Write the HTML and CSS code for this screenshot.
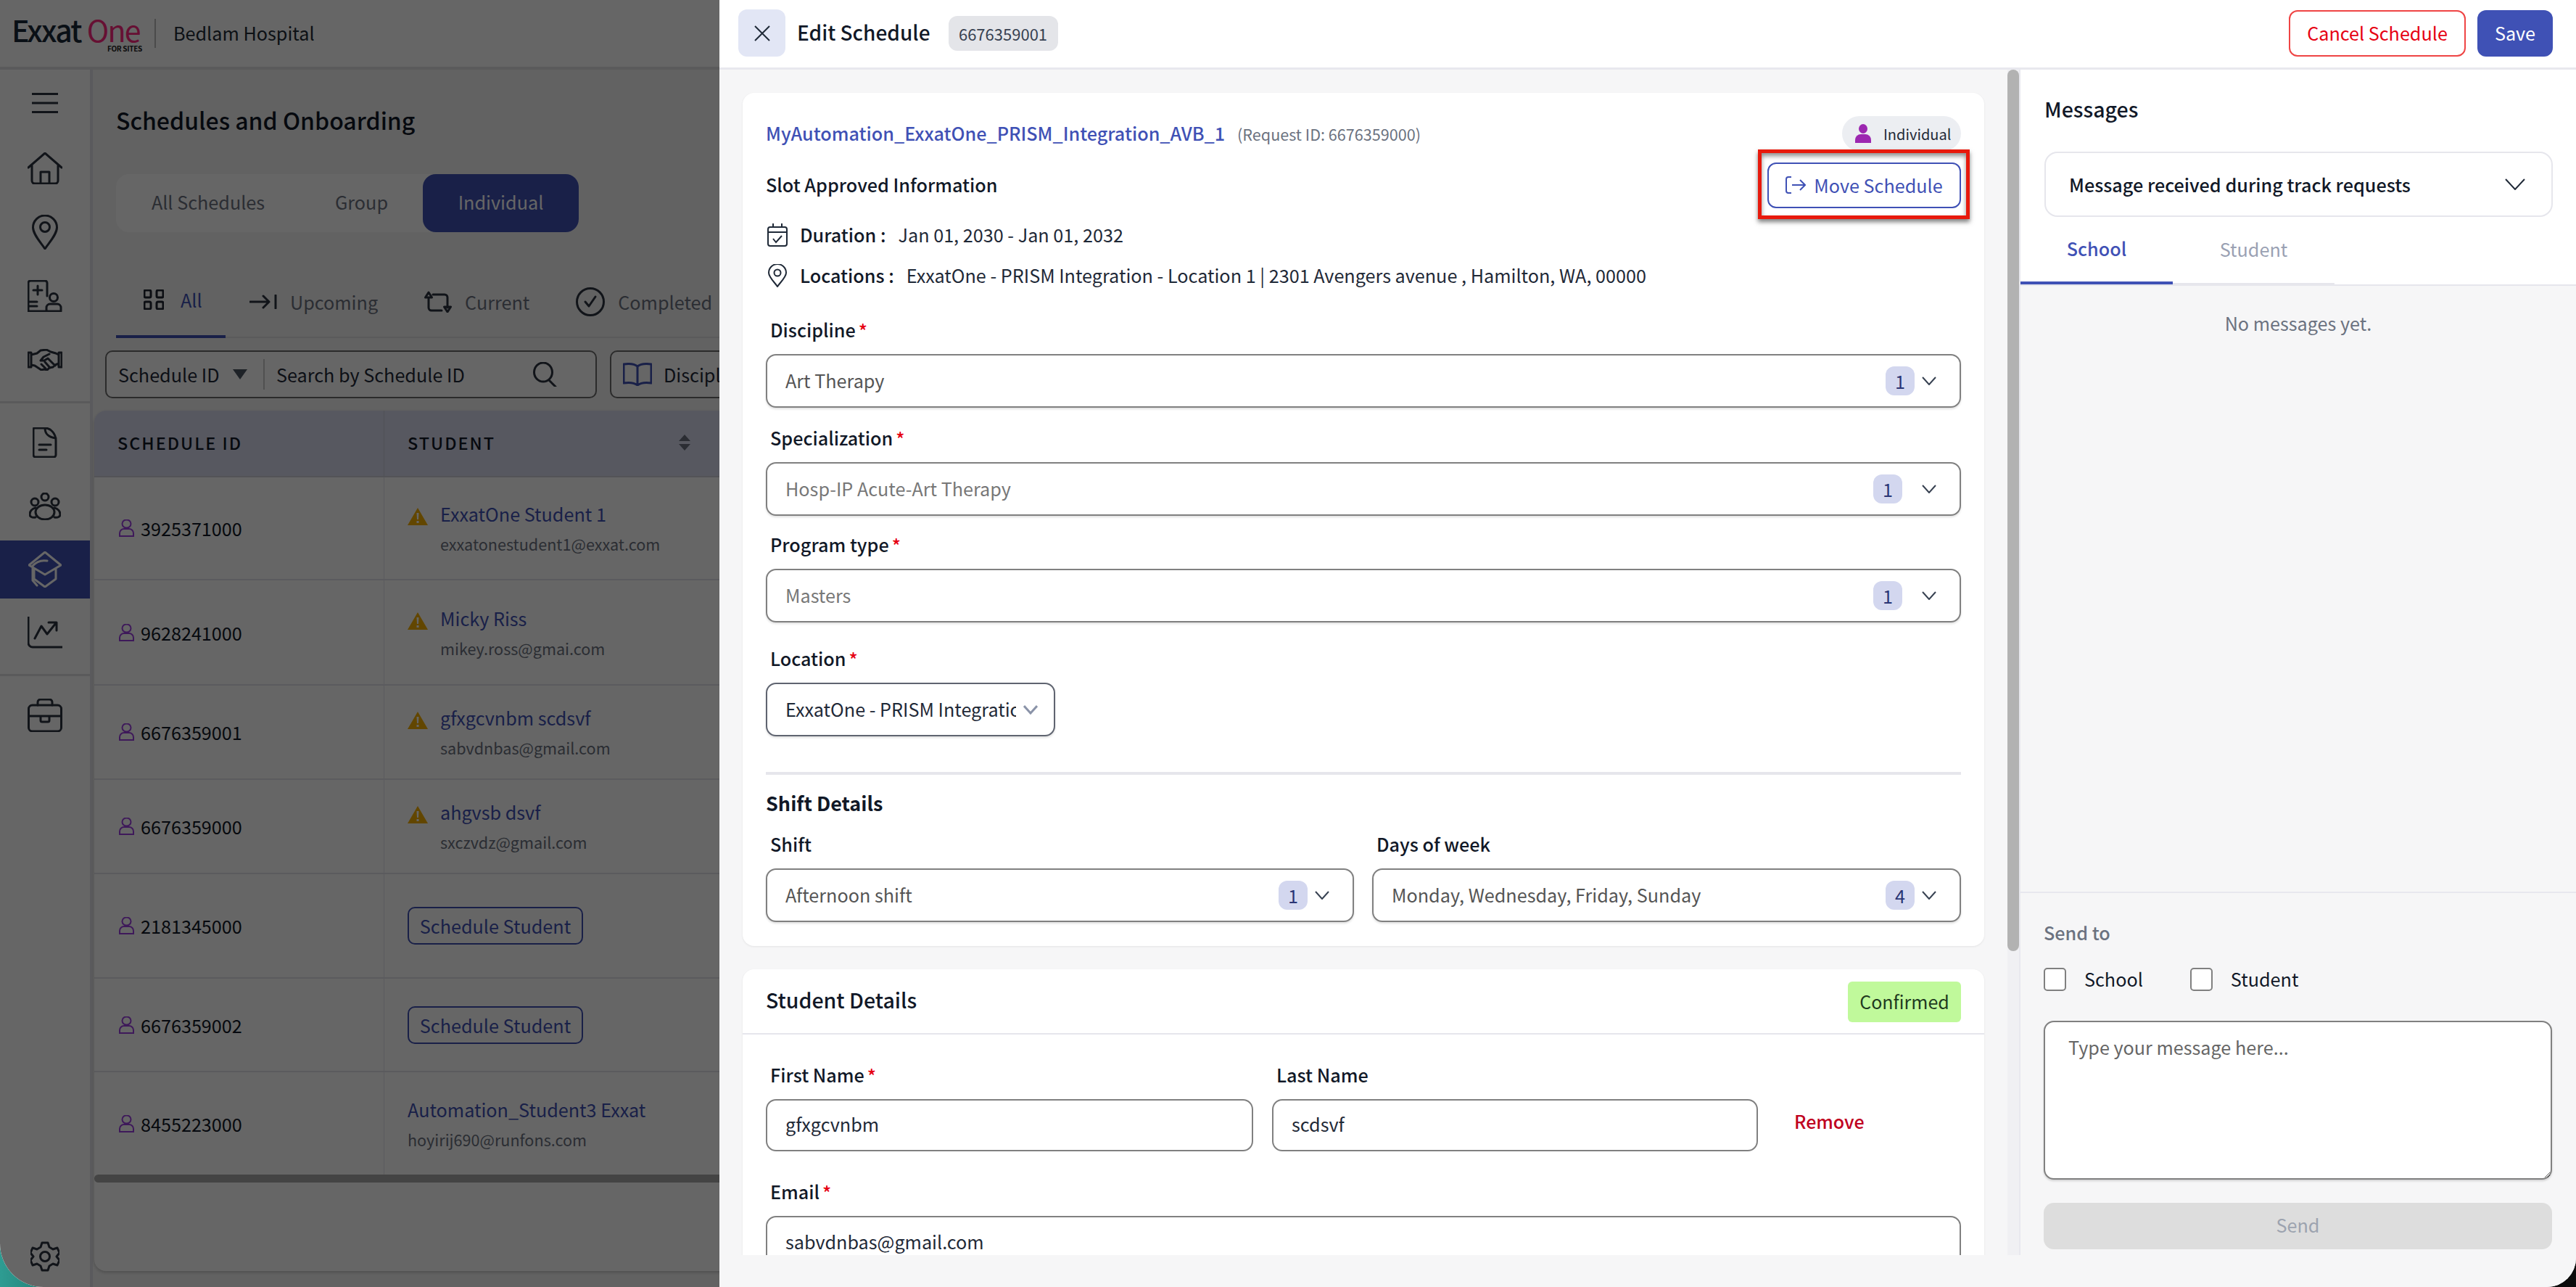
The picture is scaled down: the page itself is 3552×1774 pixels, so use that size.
FILE: index.html
```html
<!DOCTYPE html>
<html lang="en">
<head>
<meta charset="utf-8">
<title>Edit Schedule</title>
<link rel="stylesheet" href="styles.css">
</head>
<body>
<div class="window">
  <div class="app">
    <header class="topbar">
      <div class="logo">
        <div class="logo-word"><span class="logo-exxat">Exxat</span><span class="logo-one">One</span></div>
        <div class="logo-sub">FOR SITES</div>
      </div>
      <div class="logo-rule"></div>
      <div class="org">Bedlam Hospital</div>
    </header>
    <div class="app-body">
      <nav class="sidebar">
        <div class="nav-item nav-menu"><svg width="36" height="28" viewBox="0 0 36 28" class="ico"><path d="M0 1.500h36M0 14h36M0 26.500h36"/></svg></div>
        <div class="nav-item"><svg width="48" height="44" viewBox="0 0 48 44" class="ico"><path d="M1 21 24 1l23 20M6 18v21a4 4 0 0 0 4 4h28a4 4 0 0 0 4-4V18M18 43V27h12v16"/></svg></div>
        <div class="nav-item"><svg width="36" height="48" viewBox="0 0 36 48" class="ico"><path d="M18 47C12 38 1.500 27 1.500 17.500a16.500 16.500 0 0 1 33 0C34.500 27 24 38 18 47Z"/><circle cx="18" cy="17" r="6.500"/></svg></div>
        <div class="nav-item"><svg width="48" height="44" viewBox="0 0 48 44" class="ico"><path d="M1 30V4a3 3 0 0 1 3-3h20a3 3 0 0 1 3 3v18M1 30v13h26M1 30h12M1 36h12M14 8v12M8 14h12"/><circle cx="36" cy="24" r="5.500"/><path d="M26 43v-5a5 5 0 0 1 5-5h10a5 5 0 0 1 5 5v5Z"/></svg></div>
        <div class="nav-item"><svg width="48" height="30" viewBox="0 0 48 30" class="ico"><path d="M1 5v20h4V5ZM47 5v20h-4V5ZM5 8l8-2 5-4 8-1 6 3 7 2 4 2M5 22l5 1 9 6 4-1 4 1 3-3 5-1 3-3 5-2M30 7l-8 4-4 5 5 0 5-3 10 10M19 21l6 6M24 18l7 8"/></svg></div>
        <div class="nav-rule nav-rule-a"></div>
        <div class="nav-item"><svg width="34" height="42" viewBox="0 0 34 42" class="ico"><path d="M3 1h14c8 0 15 8 15 17v20a3 3 0 0 1-3 3H4a3 3 0 0 1-3-3V3a2 2 0 0 1 2-2ZM17 1c0 5 1 12 15 14M9 24h16M9 31h10"/></svg></div>
        <div class="nav-item"><svg width="44" height="38" viewBox="0 0 44 38" class="ico"><circle cx="22" cy="6" r="5"/><circle cx="8" cy="13" r="5"/><circle cx="36" cy="13" r="5"/><ellipse cx="22" cy="27" rx="13" ry="10"/><path d="M9 21c-5 1-8 5-8 9 0 3 3 5 8 4M35 21c5 1 8 5 8 9 0 3-3 5-8 4"/></svg></div>
        <div class="nav-item nav-active"><svg width="46" height="50" viewBox="0 0 46 50" class="ico ico-light"><path d="M23 1 45 19 23 32 1 19ZM8 24v14l15 11 15-11V24M6 20c7-8 14-8 20-7M6 20v20l6 7"/></svg></div>
        <div class="nav-item"><svg width="48" height="44" viewBox="0 0 48 44" class="ico"><path d="M1 0v36a6 6 0 0 0 6 6h41M10 30l9-17 8 11 12-15M29 8h11v11"/></svg></div>
        <div class="nav-rule nav-rule-b"></div>
        <div class="nav-item"><svg width="48" height="46" viewBox="0 0 48 46" class="ico"><rect x="1.500" y="9" width="45" height="36" rx="5"/><path d="M14 9V5a4 4 0 0 1 4-4h12a4 4 0 0 1 4 4v4M1.500 24h45M18 24v6a2 2 0 0 0 2 2h8a2 2 0 0 0 2-2v-6"/></svg></div>
        <div class="nav-item nav-gear"><svg width="40" height="42" viewBox="0 0 40 42" class="ico"><path d="M16 2h8l2 6 5 3 6-2 3 7-4 5 4 5-3 7-6-2-5 3-2 6h-8l-2-6-5-3-6 2-3-7 4-5-4-5 3-7 6 2 5-3Z" stroke-linejoin="round"/><circle cx="20" cy="21" r="6.500"/></svg></div>
      </nav>
      <main class="main">
        <h1 class="page-title">Schedules and Onboarding</h1>
        <div class="segment">
          <span class="seg seg-all">All Schedules</span>
          <span class="seg seg-group">Group</span>
          <span class="seg seg-on">Individual</span>
        </div>
        <div class="tabs">
          <div class="tab tab-on"><svg width="28" height="28" viewBox="0 0 28 28" class="ico"><rect x="1" y="1" width="9" height="10" rx="2"/><rect x="18" y="1" width="9" height="10" rx="2"/><rect x="1" y="17" width="9" height="10" rx="2"/><rect x="18" y="17" width="9" height="10" rx="2"/></svg><span>All</span></div>
          <div class="tab"><svg width="38" height="20" viewBox="0 0 38 20" class="ico"><path d="M1 10h26M19 2l8 8-8 8M36 1v18"/></svg><span>Upcoming</span></div>
          <div class="tab"><svg width="38" height="30" viewBox="0 0 38 30" class="ico"><path d="M6 9v14a4 4 0 0 0 4 4h14M1.500 9 6 2l4.500 7ZM12 5h16a4 4 0 0 1 4 4v14M27.500 22l4.500 7 4.500-7Z"/></svg><span>Current</span></div>
          <div class="tab"><svg width="40" height="40" viewBox="0 0 40 40" class="ico"><circle cx="20" cy="20" r="18.500"/><path d="M13 20l5 6 9-13"/></svg><span>Completed</span></div>
        </div>
        <div class="filters">
          <div class="searchbox">
            <span class="sb-field">Schedule ID</span>
            <svg width="20" height="14" viewBox="0 0 20 14" class="caret"><path d="M0 0h20L10 14Z"/></svg>
            <span class="sb-rule"></span>
            <span class="sb-query">Search by Schedule ID</span>
            <svg width="34" height="34" viewBox="0 0 34 34" class="ico"><ellipse cx="14" cy="14" rx="12.500" ry="13"/><path d="M22 25l9 9"/></svg>
          </div>
          <div class="filterbox">
            <svg width="40" height="32" viewBox="0 0 40 32" class="ico ico-blue"><path d="M20 5C15 1 8 1 1 2v26c7-1 14-1 19 3 5-4 12-4 19-3V2c-7-1-14-1-19 3Zm0 0v26"/></svg>
            <span>Discipline</span>
          </div>
        </div>
        <section class="table">
          <div class="th">SCHEDULE ID</div>
          <div class="th th-student">STUDENT<svg width="16" height="22" viewBox="0 0 16 22" class="sort"><path d="M8 0l8 9H0ZM0 13h16l-8 9Z"/></svg></div>

          <div class="td td-id"><svg width="21" height="24" viewBox="0 0 21 24" class="ico-person"><ellipse cx="10.500" cy="6" rx="6" ry="5.500"/><path d="M1 23v-4a6 6 0 0 1 6-6h7a6 6 0 0 1 6 6v4Z"/></svg>3925371000</div>
          <div class="td td-st"><svg width="28" height="24" viewBox="0 0 28 24" class="warn"><path d="M14 0 28 24H0Z"/><path class="warn-mark" d="M12.500 7h3l-.5 9h-2ZM12.500 18h3v3h-3Z"/></svg><div><div class="st-name">ExxatOne Student 1</div><div class="st-mail">exxatonestudent1@exxat.com</div></div></div>

          <div class="td td-id"><svg width="21" height="24" viewBox="0 0 21 24" class="ico-person"><ellipse cx="10.500" cy="6" rx="6" ry="5.500"/><path d="M1 23v-4a6 6 0 0 1 6-6h7a6 6 0 0 1 6 6v4Z"/></svg>9628241000</div>
          <div class="td td-st"><svg width="28" height="24" viewBox="0 0 28 24" class="warn"><path d="M14 0 28 24H0Z"/><path class="warn-mark" d="M12.500 7h3l-.5 9h-2ZM12.500 18h3v3h-3Z"/></svg><div><div class="st-name">Micky Riss</div><div class="st-mail">mikey.ross@gmai.com</div></div></div>

          <div class="td td-id"><svg width="21" height="24" viewBox="0 0 21 24" class="ico-person"><ellipse cx="10.500" cy="6" rx="6" ry="5.500"/><path d="M1 23v-4a6 6 0 0 1 6-6h7a6 6 0 0 1 6 6v4Z"/></svg>6676359001</div>
          <div class="td td-st"><svg width="28" height="24" viewBox="0 0 28 24" class="warn"><path d="M14 0 28 24H0Z"/><path class="warn-mark" d="M12.500 7h3l-.5 9h-2ZM12.500 18h3v3h-3Z"/></svg><div><div class="st-name">gfxgcvnbm scdsvf</div><div class="st-mail">sabvdnbas@gmail.com</div></div></div>

          <div class="td td-id"><svg width="21" height="24" viewBox="0 0 21 24" class="ico-person"><ellipse cx="10.500" cy="6" rx="6" ry="5.500"/><path d="M1 23v-4a6 6 0 0 1 6-6h7a6 6 0 0 1 6 6v4Z"/></svg>6676359000</div>
          <div class="td td-st"><svg width="28" height="24" viewBox="0 0 28 24" class="warn"><path d="M14 0 28 24H0Z"/><path class="warn-mark" d="M12.500 7h3l-.5 9h-2ZM12.500 18h3v3h-3Z"/></svg><div><div class="st-name">ahgvsb dsvf</div><div class="st-mail">sxczvdz@gmail.com</div></div></div>

          <div class="td td-id"><svg width="21" height="24" viewBox="0 0 21 24" class="ico-person"><ellipse cx="10.500" cy="6" rx="6" ry="5.500"/><path d="M1 23v-4a6 6 0 0 1 6-6h7a6 6 0 0 1 6 6v4Z"/></svg>2181345000</div>
          <div class="td td-st"><span class="sched-btn">Schedule Student</span></div>

          <div class="td td-id"><svg width="21" height="24" viewBox="0 0 21 24" class="ico-person"><ellipse cx="10.500" cy="6" rx="6" ry="5.500"/><path d="M1 23v-4a6 6 0 0 1 6-6h7a6 6 0 0 1 6 6v4Z"/></svg>6676359002</div>
          <div class="td td-st"><span class="sched-btn">Schedule Student</span></div>

          <div class="td td-id td-last"><svg width="21" height="24" viewBox="0 0 21 24" class="ico-person"><ellipse cx="10.500" cy="6" rx="6" ry="5.500"/><path d="M1 23v-4a6 6 0 0 1 6-6h7a6 6 0 0 1 6 6v4Z"/></svg>8455223000</div>
          <div class="td td-st td-last"><div><div class="st-name">Automation_Student3 Exxat</div><div class="st-mail">hoyirij690@runfons.com</div></div></div>

          <div class="table-scroll"></div>
        </section>
      </main>
    </div>
  </div>
  <div class="scrim"></div>

  <aside class="drawer">
    <header class="dr-head">
      <button class="dr-close"><svg width="24" height="24" viewBox="0 0 24 24" class="ico-dark"><path d="M2 2l20 20M22 2 2 22"/></svg></button>
      <span class="dr-title">Edit Schedule</span>
      <span class="dr-chip">6676359001</span>
      <span class="dr-actions">
        <button class="btn-cancel">Cancel Schedule</button>
        <button class="btn-save">Save</button>
      </span>
    </header>
    <div class="dr-body">
      <div class="dr-left">
        <section class="card card-one">
          <div class="row-title">
            <div class="req-line"><span class="req-name">MyAutomation_ExxatOne_PRISM_Integration_AVB_1</span><span class="req-id">(Request ID: 6676359000)</span></div>
            <span class="ind-chip"><svg width="22" height="26" viewBox="0 0 22 26" class="ind-ico"><ellipse cx="11" cy="6.500" rx="6" ry="6.500"/><path d="M0 26v-4a8 8 0 0 1 8-8h6a8 8 0 0 1 8 8v4Z"/></svg>Individual</span>
          </div>
          <div class="row-slot">
            <span class="slot-title">Slot Approved Information</span>
            <span class="move-wrap">
              <button class="btn-move"><svg width="28" height="24" viewBox="0 0 28 24" class="ico-indigo"><path d="M8 1H4a3 3 0 0 0-3 3v16a3 3 0 0 0 3 3h4M9 12h18M20 5l7 7-7 7"/></svg>Move Schedule</button>
              <span class="callout"></span>
            </span>
          </div>
          <div class="info info-first"><svg width="28" height="32" viewBox="0 0 28 32" class="ico-dark ico-thin"><rect x="1" y="5" width="26" height="26" rx="3"/><path d="M1 12h26M8 0v5M20 0v5M8 21l4 5 8-9"/></svg><b>Duration :</b><span>Jan 01, 2030 - Jan 01, 2032</span></div>
          <div class="info"><svg width="28" height="32" viewBox="0 0 28 32" class="ico-dark ico-thin"><path d="M14 31C10 25 2 18 2 12a12 12 0 0 1 24 0c0 6-8 13-12 19Z"/><circle cx="14" cy="12" r="4.500"/></svg><b>Locations :</b><span>ExxatOne - PRISM Integration - Location 1 | 2301 Avengers avenue , Hamilton, WA, 00000</span></div>

          <div class="field field-a">
            <label class="lbl">Discipline<i>*</i></label>
            <div class="sel"><span class="sel-text">Art Therapy</span><span class="badge badge-a">1</span><svg width="20" height="12" viewBox="0 0 20 12" class="chev"><path d="M1 1l9 10 9-10"/></svg></div>
          </div>
          <div class="field field-b">
            <label class="lbl">Specialization<i>*</i></label>
            <div class="sel sel-wide"><span class="sel-text sel-muted">Hosp-IP Acute-Art Therapy</span><span class="badge">1</span><svg width="20" height="12" viewBox="0 0 20 12" class="chev"><path d="M1 1l9 10 9-10"/></svg></div>
          </div>
          <div class="field field-c">
            <label class="lbl">Program type<i>*</i></label>
            <div class="sel sel-wide"><span class="sel-text sel-muted">Masters</span><span class="badge">1</span><svg width="20" height="12" viewBox="0 0 20 12" class="chev"><path d="M1 1l9 10 9-10"/></svg></div>
          </div>
          <div class="field field-d">
            <label class="lbl">Location<i>*</i></label>
            <div class="sel sel-loc"><span class="sel-clip">ExxatOne - PRISM Integration - Location 1</span><svg width="20" height="13" viewBox="0 0 20 13" class="chev chev-soft"><path d="M1 1l9 10 9-10"/></svg></div>
          </div>
          <div class="rule"></div>
          <h3 class="shift-title">Shift Details</h3>
          <div class="shift-grid">
            <div class="shift-col">
              <label class="lbl">Shift</label>
              <div class="sel"><span class="sel-text">Afternoon shift</span><span class="badge badge-a">1</span><svg width="20" height="12" viewBox="0 0 20 12" class="chev"><path d="M1 1l9 10 9-10"/></svg></div>
            </div>
            <div class="shift-col">
              <label class="lbl">Days of week</label>
              <div class="sel"><span class="sel-text">Monday, Wednesday, Friday, Sunday</span><span class="badge badge-a">4</span><svg width="20" height="12" viewBox="0 0 20 12" class="chev"><path d="M1 1l9 10 9-10"/></svg></div>
            </div>
          </div>
        </section>
        <section class="card card-two">
          <div class="card-head"><h3 class="student-title">Student Details</h3><span class="confirmed">Confirmed</span></div>
          <div class="card-form">
            <div class="name-grid">
              <div><label class="lbl">First Name<i>*</i></label><input class="inp" value="gfxgcvnbm"></div>
              <div><label class="lbl">Last Name</label><input class="inp" value="scdsvf"></div>
              <span class="remove">Remove</span>
            </div>
            <div class="email-field"><label class="lbl">Email<i>*</i></label><input class="inp" value="sabvdnbas@gmail.com"></div>
          </div>
        </section>
      </div>
      <div class="dr-scroll"><div class="dr-thumb"></div></div>
      <div class="dr-right">
        <div class="msg-top">
          <h2 class="msg-title">Messages</h2>
          <div class="msg-dd"><span>Message received during track requests</span><svg width="28" height="16" viewBox="0 0 28 16" class="ico-dark ico-thin"><path d="M1 1l13 14L27 1"/></svg></div>
          <div class="msg-tabs"><span class="msg-tab msg-tab-on">School</span><span class="msg-tab">Student</span></div>
        </div>
        <div class="msg-list">No messages yet.</div>
        <div class="composer">
          <div class="send-to">Send to</div>
          <div class="checks">
            <label class="check"><input type="checkbox" class="cb"><span>School</span></label>
            <label class="check"><input type="checkbox" class="cb"><span>Student</span></label>
          </div>
          <textarea class="ta" placeholder="Type your message here..."></textarea>
          <button class="btn-send">Send</button>
        </div>
      </div>
    </div>
    <div class="dr-foot"></div>
  </aside>
</div>
</body>
</html>
```
FILE: styles.css
```css
* { box-sizing: border-box; }
html, body { margin: 0; padding: 0; height: 100%; }
body {
  width: 3552px; height: 1774px; overflow: hidden;
  background: linear-gradient(90deg, #2e9c92 0, #1d6e66 3%, #111 28%, #0c0c0c 100%);
  font-family: "Noto Sans CJK SC", "Noto Sans", sans-serif;
  color: #111827;
}
button, input, textarea { font-family: inherit; }
h1, h2, h3 { margin: 0; }
.window { position: relative; width: 3552px; height: 1774px; overflow: hidden; border-radius: 0 0 40px 60px; }
.app { width: 100%; height: 100%; background: #f5f5f5; display: flex; flex-direction: column; }

/* top bar */
.topbar { height: 96px; background: #fff; border-bottom: 4px solid #e2e2e4; display: flex; align-items: center; padding-left: 16px; flex: none; }
.logo { width: 180px; display: flex; flex-direction: column; margin-top: 2px; }
.logo-word { font-size: 41px; line-height: 36px; letter-spacing: -1.800px; white-space: nowrap; }
.logo-exxat { font-weight: 500; color: #1a2a38; }
.logo-one { color: #ff2a80; margin-left: 8px; }
.logo-sub { font-size: 10px; line-height: 10px; font-weight: 700; text-align: right; letter-spacing: -.3px; margin-top: 4px; color: #222; }
.logo-rule { width: 2px; height: 40px; background: #bbb; margin-left: 17px; margin-right: 24px; }
.org { font-size: 25.200px; line-height: 36px; color: #222b36; padding-bottom: 3px; }

.app-body { flex: 1; display: flex; min-height: 0; }
.sidebar { width: 128px; flex: none; background: #fff; border-right: 4px solid #e2e2e8; display: flex; flex-direction: column; }
.nav-item { height: 88px; flex: none; display: flex; align-items: center; justify-content: center; }
.nav-menu { height: 92px; }
.nav-rule { height: 3px; background: #e2e2e4; flex: none; }
.nav-rule-a { margin: 13px 0 10px; }
.nav-rule-b { margin: 13px 0 10px; }
.nav-active { height: 80px; margin: 3px 0; background: #3f51b5; }
.nav-gear { margin-top: auto; height: 60px; margin-bottom: 12px; }
.ico { fill: none; stroke: #2c3340; stroke-width: 3; stroke-linecap: round; stroke-linejoin: round; flex: none; }
.ico-light { stroke: #fff; }
.ico-blue { stroke: #3f51b5; }

.main { flex: 1; min-width: 0; }
.page-title { font-size: 32px; line-height: 44px; font-weight: 500; margin: 47px 0 0 32px; color: #111827; }
.segment { margin: 53px 0 0 32px; width: 638px; height: 80px; background: #fff; border-radius: 18px; display: flex; align-items: center; font-size: 25.200px; color: #6b7280; }
.seg { text-align: center; line-height: 76px; height: 80px; padding-bottom: 4px; }
.seg-all { width: 254px; }
.seg-group { width: 169px; }
.seg-on { width: 215px; background: #3f51b5; color: #fff; border-radius: 18px; }
.tabs { margin: 60px 0 0 32px; height: 86px; border-bottom: 2px solid #e2e2e4; display: flex; font-size: 25.200px; color: #6b7280; }
.tab { display: flex; align-items: center; gap: 18px; height: 86px; padding: 0 0 14px; margin-right: 64px; }
.tab-on { width: 151px; margin-right: 33px; justify-content: flex-start; padding-left: 38px; gap: 23px; border-bottom: 4px solid #3f51b5; color: #3f51b5; padding-bottom: 16px; }
.tab-on .ico { stroke: #1e2530; }
.filters { margin: 17px 0 0 17px; display: flex; gap: 18px; }
.searchbox { width: 678px; height: 66px; border: 2px solid #6c6c6c; border-radius: 10px; background: #fff; display: flex; align-items: center; padding-left: 16px; font-size: 25.200px; color: #1f2937; }
.sb-field { width: 158px; }
.caret { fill: #4b5563; flex: none; }
.sb-rule { width: 2px; height: 42px; background: #c8c8c8; margin: 0 16px 0 22px; flex: none; }
.sb-query { width: 354px; }
.filterbox { width: 400px; height: 66px; border: 2px solid #6c6c6c; border-radius: 10px; background: #fff; display: flex; align-items: center; padding-left: 16px; gap: 16px; font-size: 25.200px; color: #1f2937; }
.table { margin: 17px 0 0 2px; width: 1000px; height: 1186px; background: #fff; border-radius: 16px; overflow: hidden; display: grid; grid-template-columns: 400px 600px; grid-template-rows: 92px 142px 145px 130px 130px 144px 129px 141px 11px; box-shadow: 0 2px 4px rgba(0,0,0,.2); }
.th { background: #d9dcf0; display: flex; align-items: center; padding: 0 0 2px 32px; font-size: 23.400px; font-weight: 500; letter-spacing: 2px; color: #111827; border-right: 1px solid #c8cad8; border-bottom: 2px solid #cfd0da; }
.sort { fill: #6b7280; margin-left: 253px; flex: none; }
.td { border-bottom: 2px solid #e4e4ea; border-right: 1px solid #e4e4ea; display: flex; align-items: center; font-size: 25.200px; }
.td-last { border-bottom: 0; }
.td-id { padding-left: 34px; gap: 9px; color: #111827; }
.ico-person { fill: none; stroke: #9c3fe0; stroke-width: 2; flex: none; }
.td-st { padding-left: 32px; gap: 17px; }
.warn { fill: #f5b000; flex: none; margin-bottom: 32px; }
.warn-mark { fill: #fff; }
.st-name { font-size: 25.200px; line-height: 36px; color: #3f51b5; }
.st-mail { font-size: 21.600px; line-height: 32px; margin-top: 8px; color: #6b7280; }
.sched-btn { height: 52px; width: 242px; border: 2px solid #3f51b5; border-radius: 10px; color: #3f51b5; font-size: 25.200px; display: flex; align-items: center; justify-content: center; }
.table-scroll { grid-column: 1 / 3; background: #aaa; border-radius: 6px 0 0 6px; }

.scrim { position: absolute; inset: 0; background: rgba(0,0,0,.6); }

/* drawer */
.drawer { position: absolute; top: 0; right: 0; bottom: 0; width: 2560px; background: #f6f6f7; display: flex; flex-direction: column; }
.dr-head { height: 96px; flex: none; background: #fff; border-bottom: 3px solid #e8e8ee; display: flex; align-items: center; padding: 0 32px 2px 26px; }
.dr-close { width: 65px; height: 65px; border: 0; border-radius: 12px; background: #e2e6f5; display: flex; align-items: center; justify-content: center; padding: 0; }
.ico-dark { fill: none; stroke: #1f2937; stroke-width: 2; flex: none; }
.ico-thin { stroke-width: 2; }
.dr-title { font-size: 28px; line-height: 40px; margin-left: 16px; color: #111827; font-weight: 500; padding-bottom: 3px; }
.dr-chip { margin-left: 25px; height: 48px; width: 151px; background: #e4e5e9; border-radius: 12px; font-size: 22px; display: flex; align-items: center; justify-content: center; color: #374151; }
.dr-actions { margin-left: auto; display: flex; gap: 16px; }
.btn-cancel { width: 244px; height: 64px; background: #fff; border: 2px solid #ef4444; border-radius: 12px; color: #e60012; font-size: 25.200px; padding: 0 0 2px; }
.btn-save { width: 104px; height: 64px; border: 0; background: #3f51b5; border-radius: 12px; color: #fff; font-size: 25.200px; padding: 0 0 2px; }

.dr-body { flex: 1; display: flex; min-height: 0; }
.dr-foot { height: 44px; flex: none; background: #f6f6f7; }
.dr-left { width: 1776px; flex: none; padding: 32px 0 0 32px; overflow: hidden; }
.dr-scroll { width: 18px; flex: none; background: #f0f0f3; border-right: 2px solid #e8e8ee; }
.dr-thumb { width: 16px; height: 1215px; background: #b2b2b2; border-radius: 8px; }
.dr-right { flex: 1; min-width: 0; display: flex; flex-direction: column; background: #f6f6f7; }

.card { width: 1712px; background: #fff; border-radius: 16px; box-shadow: 0 1px 3px rgba(0,0,0,.08); }
.card-one { padding: 32px 32px 33px; height: 1176px; }
.row-title { height: 48px; display: flex; align-items: center; justify-content: space-between; }
.req-line { padding-bottom: 3px; }
.req-name { font-size: 25.200px; line-height: 40px; font-weight: 500; color: #3f51b5; }
.req-id { font-size: 21.600px; color: #6b7280; margin-left: 17px; }
.ind-chip { width: 164px; height: 48px; border-radius: 24px; background: #eceef2; display: flex; align-items: center; padding-left: 18px; gap: 17px; font-size: 20px; color: #1f2937; }
.ind-ico { fill: #9c27b0; flex: none; }
.row-slot { margin-top: 16px; height: 63px; display: flex; align-items: center; justify-content: space-between; }
.slot-title { font-size: 25.200px; line-height: 40px; font-weight: 500; padding-bottom: 3px; }
.move-wrap { position: relative; display: block; }
.btn-move { width: 267px; height: 63px; background: #fff; border: 2px solid #3f51b5; border-radius: 12px; color: #3f51b5; font-size: 25.200px; display: flex; align-items: center; justify-content: center; gap: 11px; padding: 0 0 2px; }
.ico-indigo { fill: none; stroke: #3f51b5; stroke-width: 2; flex: none; }
.callout { position: absolute; left: -13px; right: -12px; top: -18px; bottom: -15px; border: 5px solid #e8190c; box-shadow: 0 4px 6px rgba(0,0,0,.5), inset 0 4px 6px rgba(0,0,0,.45); }
.info { height: 32px; display: flex; align-items: center; font-size: 25.200px; margin-top: 24px; color: #1f2937; padding-left: 2px; }
.info b, .info span { padding-bottom: 3px; }
.info-first { margin-top: 21px; }
.info svg { margin-right: 17px; }
.info b { font-weight: 500; margin-right: 17px; color: #111827; }

.lbl { display: block; height: 32px; line-height: 30px; padding-left: 6px; font-size: 25.200px; font-weight: 500; color: #111827; margin-bottom: 17px; }
.lbl i { color: #e60012; font-style: normal; margin-left: 4px; vertical-align: -1px; }
.field-a { margin-top: 43px; }
.field-b { margin-top: 26px; }
.field-c { margin-top: 24px; }
.field-d { margin-top: 34px; }
.sel { height: 74px; border: 2px solid #808080; border-radius: 14px; background: #fff; display: flex; align-items: center; padding: 0 32px 0 25px; box-shadow: 0 2px 3px rgba(0,0,0,.12); }
.sel-text { flex: 1; font-size: 25.200px; color: #555; padding-bottom: 3px; }
.sel-muted { color: #777; }
.badge { width: 40px; height: 40px; border-radius: 12px; background: #d3d7ef; color: #2a3575; font-size: 25.200px; display: flex; align-items: center; justify-content: center; }
.chev { fill: none; stroke: #374151; stroke-width: 2; margin-left: 10px; flex: none; }
.sel-wide .chev { margin-left: 27px; }
.sel-loc { width: 399px; border-color: #5f6470; padding: 0 24px 0 25px; }
.sel-clip { width: 318px; flex: none; overflow: hidden; white-space: nowrap; font-size: 25.200px; color: #1f2937; padding-bottom: 3px; }
.chev-soft { stroke: #8a93a8; stroke-width: 3; margin-left: 10px; }
.rule { height: 4px; background: #e6e6ec; margin-top: 49px; }
.shift-title { font-size: 27px; line-height: 36px; font-weight: 700; margin-top: 21px; }
.shift-grid { margin-top: 23px; display: grid; grid-template-columns: 811px 812px; gap: 25px; }

.card-two { margin-top: 32px; height: 420px; }
.card-head { height: 90px; border-bottom: 2px solid #e6e6ec; display: flex; align-items: center; justify-content: space-between; padding: 0 32px; }
.student-title { font-size: 28.500px; line-height: 40px; font-weight: 500; padding-bottom: 4px; }
.confirmed { width: 156px; height: 56px; margin-top: 2px; background: #c0f99b; border-radius: 6px; display: flex; align-items: center; justify-content: center; font-size: 25px; color: #1f3a1f; padding-bottom: 3px; }
.card-form { padding: 40px 32px 0; }
.name-grid { display: grid; grid-template-columns: 672px 670px auto; gap: 26px; align-items: start; }
.inp { display: block; width: 100%; height: 72px; border: 2px solid #808080; border-radius: 14px; padding: 0 25px 4px; font-size: 25.200px; color: #1f2937; background: #fff; outline: 0; }
.remove { color: #c00020; font-size: 25px; font-weight: 500; margin: 61px 0 0 24px; line-height: 36px; }
.email-field { margin-top: 40px; }
.email-field .inp { height: 74px; }

.msg-top { background: #fff; height: 298px; flex: none; display: flex; flex-direction: column; }
.msg-title { font-size: 28.500px; line-height: 40px; font-weight: 500; margin: 34px 0 0 33px; }
.msg-dd { margin: 39px 32px 0 33px; height: 90px; border: 2px solid #e6e6ec; border-radius: 18px; display: flex; align-items: center; justify-content: space-between; padding: 0 36px 0 32px; font-size: 25.200px; font-weight: 500; }
.msg-tabs { flex: 1; border-bottom: 2px solid #e6e6ec; display: flex; }
.msg-tab { width: 223px; height: 93px; display: flex; align-items: center; justify-content: center; font-size: 25.200px; color: #9aa1b3; border-bottom: 2px solid #e6e6ec; padding-bottom: 3px; }
.msg-tab-on { width: 210px; color: #3f51b5; font-weight: 500; border-bottom: 4px solid #3f51b5; }
.msg-list { flex: 1; padding-top: 35px; text-align: center; font-size: 25.200px; line-height: 32px; color: #6b7280; }
.composer { height: 501px; flex: none; border-top: 2px solid #e8e8ee; padding: 38px 32px 0 32px; }
.send-to { font-size: 25.200px; line-height: 32px; font-weight: 500; color: #6b7280; }
.checks { margin-top: 33px; height: 32px; display: flex; gap: 65px; }
.check { display: flex; align-items: center; gap: 25px; font-size: 25.200px; color: #111827; }
.check span { padding-bottom: 3px; }
.cb { appearance: none; width: 31px; height: 32px; margin: 0; background: #fff; border: 2px solid #808080; border-radius: 5px; }
.ta { display: block; margin-top: 41px; width: 701px; height: 219px; border: 2px solid #808080; border-radius: 14px; background: #fff; padding: 16px 32px; font-size: 25.200px; line-height: 36px; outline: 0; resize: both; box-shadow: 0 2px 3px rgba(0,0,0,.15); }
.ta::placeholder { color: #666; opacity: 1; }
.btn-send { display: block; margin-top: 32px; width: 701px; height: 64px; border: 0; border-radius: 14px; background: #ddd; color: #9ca3af; font-size: 25.200px; padding: 0 0 4px; }
```
